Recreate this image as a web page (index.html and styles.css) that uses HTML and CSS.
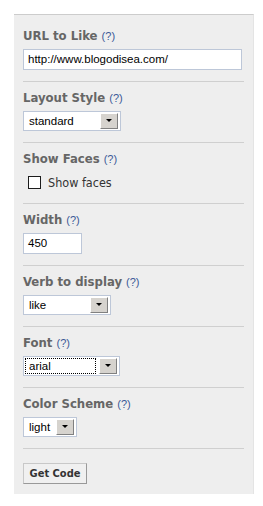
FILE: index.html
```html
<!DOCTYPE html>
<html lang="en">
<head>
    <meta charset="UTF-8">
    <title>Like Button</title>
    <link rel="stylesheet" href="styles.css">
</head>
<body>

<div class="panel">
    <!-- URL -->
    <div class="field">
        <div class="label">URL to Like <a class="help">(?)</a></div>
        <div class="text-input wide">http://www.blogodisea.com/</div>
    </div>

    <div class="field">
        <div class="label">Layout Style <a class="help">(?)</a></div>
        <div class="select" style="width:98px"><span class="value">standard</span><span class="arrow"></span></div>
    </div>

    <div class="field">
        <div class="label">Show Faces <a class="help">(?)</a></div>
        <label class="check"><span class="box"></span>Show faces</label>
    </div>

    <div class="field">
        <div class="label">Width <a class="help">(?)</a></div>
        <div class="text-input" style="width:59px">450</div>
    </div>

    <div class="field">
        <div class="label">Verb to display <a class="help">(?)</a></div>
        <div class="select" style="width:88px"><span class="value">like</span><span class="arrow"></span></div>
    </div>

    <div class="field">
        <div class="label">Font <a class="help">(?)</a></div>
        <div class="select" style="width:97px"><span class="value focus">arial</span><span class="arrow"></span></div>
    </div>

    <div class="field">
        <div class="label">Color Scheme <a class="help">(?)</a></div>
        <div class="select" style="width:54px"><span class="value">light</span><span class="arrow"></span></div>
    </div>

    <div class="actions">
        <button class="button">Get Code</button>
    </div>
</div>

</body>
</html>
```

FILE: styles.css
```css
body {
    margin: 14px 0 0 14px;
    background-color: #fff;
    font-family: 'Liberation Sans', Arial, sans-serif;
    font-size: 12px;
    color: #333;
}
.panel {
    width: 221px;
    padding: 5px 9px 10px 9px;
    background-color: #eeeeee;
    border-top: 1px solid #cccccc;
    border-right: 1px solid #e4e4e4;
}
.field {
    padding: 8px 0 11px;
    border-bottom: 1px solid #cfcfcf;
}
.label {
    height: 16px;
    line-height: 16px;
    margin-bottom: 5px;
    font-family: 'DejaVu Sans Condensed', 'DejaVu Sans', sans-serif;
    font-size: 13px;
    font-weight: bold;
    color: #666;
}
.help {
    font-family: 'Liberation Sans', Arial, sans-serif;
    font-size: 11px;
    font-weight: normal;
    color: #3b5998;
}
.text-input {
    box-sizing: border-box;
    height: 21px;
    line-height: 19px;
    padding: 0 4px;
    background-color: #fff;
    border: 1px solid #bdc7d8;
    font-size: 11.5px;
    color: #000;
}
.text-input.wide {
    width: 219px;
}
.select {
    box-sizing: border-box;
    display: flex;
    align-items: center;
    height: 20px;
    padding: 1px;
    background-color: #fff;
    border: 1px solid #bdc7d8;
    font-size: 11.5px;
    color: #000;
}
.select .value {
    flex: 1;
    height: 16px;
    line-height: 16px;
    padding-left: 4px;
}
.select .focus {
    outline: 1px dotted #000;
    outline-offset: -1px;
}
.select .arrow {
    position: relative;
    width: 16px;
    height: 14px;
    margin: 0 1px 0 3px;
    background-color: #d6d3ce;
    border: 1px solid;
    border-color: #fff #808080 #808080 #fff;
}
.select .arrow::after {
    content: "";
    position: absolute;
    left: 5px;
    top: 5px;
    border-left: 3px solid transparent;
    border-right: 3px solid transparent;
    border-top: 3px solid #000;
}
.check {
    display: flex;
    align-items: center;
    height: 20px;
    padding-left: 5px;
    font-family: 'DejaVu Sans Condensed', 'DejaVu Sans', sans-serif;
    font-size: 12.5px;
    color: #333;
}
.check .box {
    box-sizing: border-box;
    width: 13px;
    height: 13px;
    margin-right: 7px;
    background-color: #fff;
    border: 1px solid #1c1c1c;
}
.actions {
    padding-top: 14px;
}
.button {
    height: 21px;
    width: 64px;
    padding: 0;
    background-color: #f0f0f0;
    border: 1px solid #a0a0a0;
    border-color: #c8c8c8 #999 #999 #c8c8c8;
    font-family: 'DejaVu Sans Condensed', 'DejaVu Sans', sans-serif;
    font-size: 11px;
    font-weight: bold;
    color: #333;
}
```
